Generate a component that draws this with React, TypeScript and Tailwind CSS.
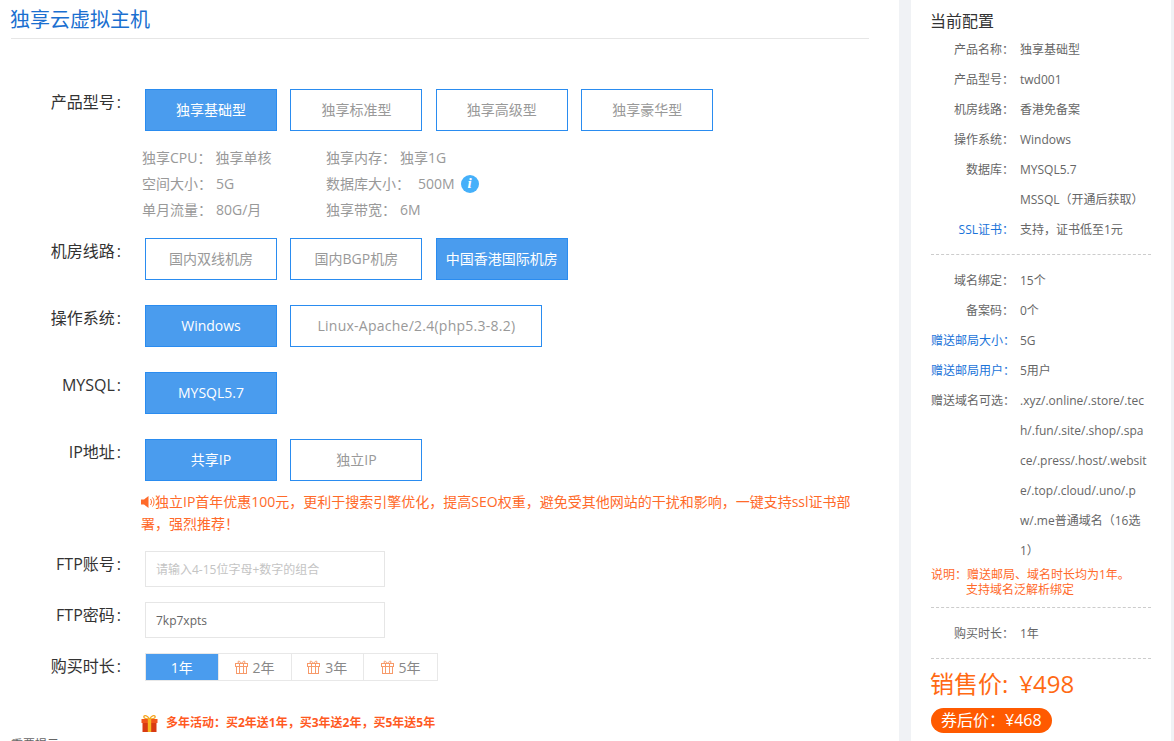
import React from "react";

const font = { fontFamily: '"Open Sans","Noto Sans CJK SC",sans-serif' };

function Opt({ t, on, w = "w-[132px]" }: { t: string; on?: boolean; w?: string }) {
  return (
    <div
      className={`h-[42px] ${w} mr-[13.4px] flex items-center justify-center border border-[#2a8cf0] pb-[2px] text-[14px] whitespace-nowrap ${
        on ? "bg-[#4a9cee] text-white" : "bg-white text-[#999]"
      }`}
    >
      {t}
    </div>
  );
}

function Row({ label, children, cls = "" }: { label: string; children: React.ReactNode; cls?: string }) {
  return (
    <div className={`flex ${cls}`}>
      <div className="w-[121px] pt-[1px] text-right text-[16px] leading-[24px] text-[#333] whitespace-nowrap">
        {label}
        <span className="ml-[2px]">:</span>
      </div>
      <div className="ml-[24px] flex">{children}</div>
    </div>
  );
}

function GiftLine() {
  return (
    <svg width="13" height="14" viewBox="0 0 13 14" fill="none" stroke="#f79a6a" strokeWidth="1" className="mr-[5px]">
      <rect x="0.500" y="3.500" width="12" height="3" />
      <rect x="1.500" y="6.500" width="10" height="7" />
      <path d="M4.500 3.500v10M8.500 3.500v10M6.500 3.500C5 1 3 .5 3 2s1.500 1.500 3.500 1.500c2 0 3.500 0 3.500-1.500S8 1 6.500 3.500z" />
    </svg>
  );
}

function Year({ t, on, gift }: { t: string; on?: boolean; gift?: boolean }) {
  return (
    <div
      className={`h-full w-[73px] flex items-center justify-center text-[14px] border-r border-[#e8e8e8] last:border-r-0 ${
        on ? "bg-[#4a9cee] text-white" : "text-[#888]"
      }`}
    >
      {gift && <GiftLine />}
      {t}
    </div>
  );
}

function Spec({ k, v, vCls = "ml-[4px]", children }: { k: string; v: string; vCls?: string; children?: React.ReactNode }) {
  return (
    <div className="flex items-center h-[26px] text-[14px] text-[#999] whitespace-nowrap">
      <span>{k}</span>
      <span className={vCls}>{v}</span>
      {children}
    </div>
  );
}

function Kv({ k, v, blue }: { k?: string; v: string; blue?: boolean }) {
  return (
    <div className="flex text-[12px] leading-[30px] text-[#666]">
      <div className={`w-[83px] shrink-0 text-right whitespace-nowrap ${blue ? "text-[#1a73d9]" : ""}`}>{k}</div>
      <div className="ml-[6px] w-[127px] break-all">{v}</div>
    </div>
  );
}

function Gift() {
  return (
    <svg width="17" height="17" viewBox="0 0 17 17" className="mr-[8px]">
      <path d="M8.500 4C6 0 3 0 2.800 1.800 2.600 3.500 6 4 8.500 4c2.500 0 5.900-.5 5.700-2.200C14 0 11 0 8.500 4z" fill="none" stroke="#f5a623" strokeWidth="1.300" />
      <rect x="0.500" y="4" width="16" height="4" fill="#f2541b" />
      <rect x="1.500" y="8" width="14" height="9" fill="#d93a12" />
      <rect x="6.800" y="4" width="3.400" height="13" fill="#f5b921" />
    </svg>
  );
}

export default function App() {
  return (
    <div className="flex h-[741px] w-[1174px] overflow-hidden bg-[#f0f2f5]" style={font}>
      <main className="h-full w-[899px] shrink-0 overflow-hidden bg-white pl-[11px] pr-[30px]">
        <h1 className="h-[39px] border-b border-[#e6e6e6] indent-[-1px] text-[20px] font-normal leading-[40px] text-[#1a6fd0]">独享云虚拟主机</h1>
        <div className="-ml-[11px] pt-[50px]">
          <Row label="产品型号">
            <Opt t="独享基础型" on />
            <Opt t="独享标准型" />
            <Opt t="独享高级型" />
            <Opt t="独享豪华型" />
          </Row>
          <div className="ml-[142px] mt-[13px] flex">
            <div className="w-[184px]">
              <Spec k="独享CPU：" v="独享单核" />
              <Spec k="空间大小：" v="5G" />
              <Spec k="单月流量：" v="80G/月" />
            </div>
            <div>
              <Spec k="独享内存：" v="独享1G" />
              <Spec k="数据库大小：" v="500M" vCls="ml-[8px]">
                <span className="ml-[6px] mt-[1px] flex h-[18px] w-[18px] items-center justify-center rounded-full bg-[#45b0fa] text-[15px] font-bold italic leading-none text-white" style={{ fontFamily: '"Liberation Serif",serif' }}>i</span>
              </Spec>
              <Spec k="独享带宽：" v="6M" />
            </div>
          </div>
          <Row label="机房线路" cls="mt-[16px]">
            <Opt t="国内双线机房" />
            <Opt t="国内BGP机房" />
            <Opt t="中国香港国际机房" on />
          </Row>
          <Row label="操作系统" cls="mt-[25px]">
            <Opt t="Windows" on />
            <Opt t="Linux-Apache/2.4(php5.3-8.2)" w="w-[252px] tracking-[0.25px]" />
          </Row>
          <Row label="MYSQL" cls="mt-[25px]">
            <Opt t="MYSQL5.7" on />
          </Row>
          <Row label="IP地址" cls="mt-[25px]">
            <Opt t="共享IP" on />
            <Opt t="独立IP" />
          </Row>
          <div className="ml-[141px] mt-[10px] w-[720px] text-[14px] leading-[22px] text-[#ff6a2a]">
            <svg width="14" height="14" viewBox="0 0 14 14" className="inline-block align-[-2px]" fill="#ff6a2a">
              <path d="M0 4.500h3L7.500 1v12L3 9.500H0z" />
              <path d="M9.500 4c1.300 1.800 1.300 4.200 0 6M11.500 2.500c2 2.700 2 6.300 0 9" fill="none" stroke="#ff6a2a" strokeWidth="1" />
            </svg>
            独立IP首年优惠100元，更利于搜索引擎优化，提高SEO权重，避免受其他网站的干扰和影响，一键支持ssl证书部署，强烈推荐！
          </div>
          <Row label="FTP账号" cls="mt-[16px]">
            <div className="flex h-[36px] w-[240px] items-center border border-[#e6e6e6] pl-[10px] pt-[2px] text-[12px] text-[#c4c4c4]">请输入4-15位字母+数字的组合</div>
          </Row>
          <Row label="FTP密码" cls="mt-[15px]">
            <div className="flex h-[36px] w-[240px] items-center border border-[#e6e6e6] pl-[10px] pt-[2px] text-[12px] text-[#666]">7kp7xpts</div>
          </Row>
          <Row label="购买时长" cls="mt-[15px] h-[28px]">
            <div className="flex h-[28px] w-[293px] border border-[#e8e8e8]">
              <Year t="1年" on />
              <Year t="2年" gift />
              <Year t="3年" gift />
              <Year t="5年" gift />
            </div>
          </Row>
          <div className="ml-[141px] mt-[33px] flex h-[18px] items-center text-[12px] font-bold text-[#ff5a1f]">
            <Gift />
            多年活动：买2年送1年，买3年送2年，买5年送5年
          </div>
          <div className="ml-[11px] mt-[4px] text-[12px] text-[#666]">重要提示</div>
        </div>
      </main>
      <aside className="ml-[12px] h-full w-[260px] shrink-0 overflow-hidden bg-white px-[20px]">
        <h2 className="pt-[10px] indent-[-1px] text-[16px] font-normal leading-[22px] text-[#333]">当前配置</h2>
        <div className="mt-[3px] border-b border-dashed border-[#ccc] pb-[9px]">
          <Kv k="产品名称：" v="独享基础型" />
          <Kv k="产品型号：" v="twd001" />
          <Kv k="机房线路：" v="香港免备案" />
          <Kv k="操作系统：" v="Windows" />
          <Kv k="数据库：" v="MYSQL5.7" />
          <Kv v="MSSQL（开通后获取）" />
          <Kv k="SSL证书：" v="支持，证书低至1元" blue />
        </div>
        <div className="mt-[11px]">
          <Kv k="域名绑定：" v="15个" />
          <Kv k="备案码：" v="0个" />
          <Kv k="赠送邮局大小：" v="5G" blue />
          <Kv k="赠送邮局用户：" v="5用户" blue />
          <Kv k="赠送域名可选：" v=".xyz/.online/.store/.tech/.fun/.site/.shop/.space/.press/.host/.website/.top/.cloud/.uno/.pw/.me普通域名（16选1）" />
        </div>
        <div className="mt-[1px] border-b border-dashed border-[#ccc] pb-[10px] text-[12px] leading-[15px] text-[#ff6a2a]">
          <div>说明：赠送邮局、域名时长均为1年。</div>
          <div className="pl-[35px]">支持域名泛解析绑定</div>
        </div>
        <div className="mt-[11px] border-b border-dashed border-[#ccc] pb-[9px]">
          <Kv k="购买时长：" v="1年" />
        </div>
        <div className="mt-[5px] indent-[-1px] text-[24px] leading-[40px] text-[#ff6a13]">
          销售价:<span className="ml-[11px]">¥498</span>
        </div>
        <div className="mt-[4px] inline-block h-[25px] rounded-full bg-[#ff5a00] px-[10px] text-[16px] leading-[25px] text-white whitespace-nowrap">券后价：¥468</div>
      </aside>
    </div>
  );
}
